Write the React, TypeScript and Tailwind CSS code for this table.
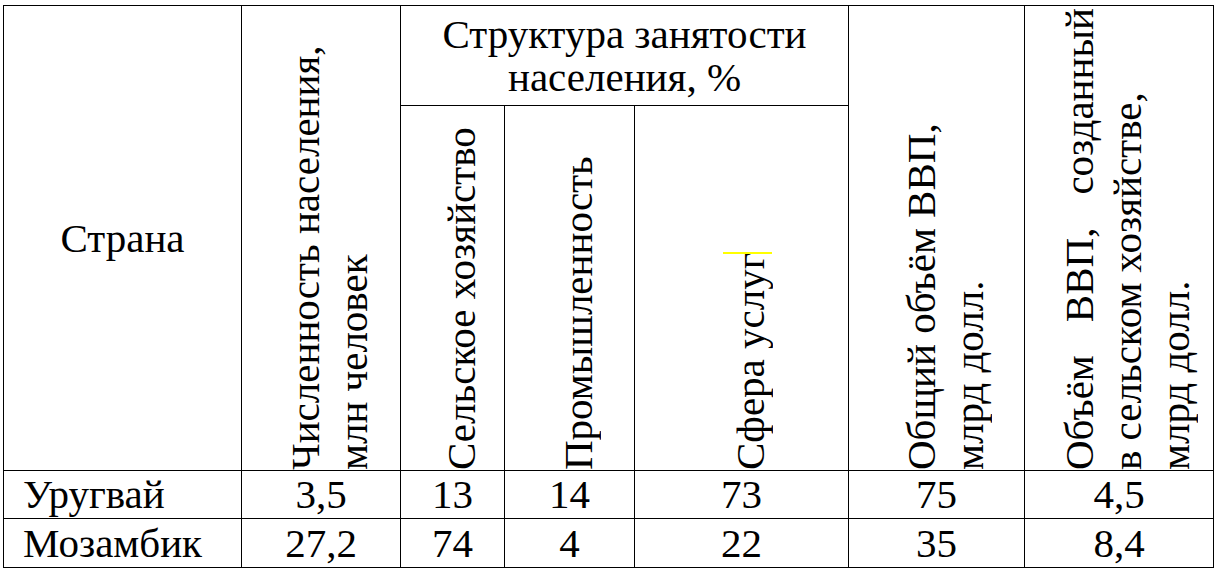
const cell = "border border-black p-0";

function VCell({
  lines,
  h,
  rowSpan,
  justifyFirst,
  children,
}: {
  lines: string[];
  h: string;
  rowSpan?: number;
  justifyFirst?: boolean;
  children?: React.ReactNode;
}) {
  return (
    <td rowSpan={rowSpan} className={`${cell} relative align-bottom`}>
      <div className="flex justify-center pl-4">
        <div className={`${h} rotate-180 leading-[48px] [writing-mode:vertical-rl]`}>
          {lines.map((line, i) => (
            <div
              key={i}
              className={i === 0 && justifyFirst ? "text-justify [text-align-last:justify]" : ""}
            >
              {line}
            </div>
          ))}
        </div>
      </div>
      {children}
    </td>
  );
}

const rows = [
  ["Уругвай", "3,5", "13", "14", "73", "75", "4,5"],
  ["Мозамбик", "27,2", "74", "4", "22", "35", "8,4"],
];

export default function App() {
  return (
    <div className="min-h-[573px] w-[1217px] bg-white pl-[3px] pt-[5px]">
      <table className="table-fixed border-collapse font-['Liberation_Serif','Times_New_Roman',serif] text-[41px] text-black">
        <colgroup>
          <col className="w-[238px]" />
          <col className="w-[159px]" />
          <col className="w-[104px]" />
          <col className="w-[130px]" />
          <col className="w-[214px]" />
          <col className="w-[176px]" />
          <col className="w-[189px]" />
        </colgroup>
        <tbody>
          <tr className="h-[100px]">
            <td rowSpan={2} className={`${cell} text-center align-middle leading-[48px]`}>
              Страна
            </td>
            <VCell rowSpan={2} h="h-[462px]" lines={["Численность населения,", "млн человек"]} />
            <td colSpan={3} className={`${cell} text-center align-middle leading-[43px]`}>
              Структура занятости
              <br />
              населения, %
            </td>
            <VCell rowSpan={2} h="h-[462px]" lines={["Общий объём ВВП,", "млрд долл."]} />
            <VCell
              rowSpan={2}
              h="h-[462px]"
              justifyFirst
              lines={["Объём ВВП, созданный", "в сельском хозяйстве,", "млрд долл."]}
            />
          </tr>
          <tr className="h-[365px]">
            <VCell h="h-[362px]" lines={["Сельское хозяйство"]} />
            <VCell h="h-[362px]" lines={["Промышленность"]} />
            <VCell h="h-[362px]" lines={["Сфера услуг"]}>
              <span className="absolute left-[88px] top-[146px] h-[2px] w-[49px] bg-[#ffff00]" />
            </VCell>
          </tr>
          {rows.map((r, i) => (
            <tr key={i} className={i === 0 ? "h-[48px]" : "h-[49px]"}>
              {r.map((v, j) => (
                <td
                  key={j}
                  className={`${cell} leading-[47px] ${j === 0 ? "pl-[19px] text-left" : "text-center"}`}
                >
                  {v}
                </td>
              ))}
            </tr>
          ))}
        </tbody>
      </table>
    </div>
  );
}
